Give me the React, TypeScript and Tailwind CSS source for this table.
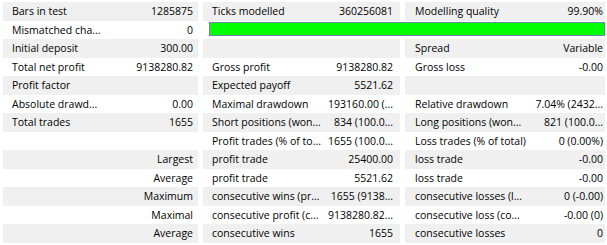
import React from 'react';

type Cell = { label?: string; value?: string };

const rows: Cell[][] = [
  [
    { label: 'Bars in test', value: '1285875' },
    { label: 'Ticks modelled', value: '360256081' },
    { label: 'Modelling quality', value: '99.90%' },
  ],
  [{ label: 'Mismatched cha...', value: '0' }],
  [
    { label: 'Initial deposit', value: '300.00' },
    {},
    { label: 'Spread', value: 'Variable' },
  ],
  [
    { label: 'Total net profit', value: '9138280.82' },
    { label: 'Gross profit', value: '9138280.82' },
    { label: 'Gross loss', value: '-0.00' },
  ],
  [
    { label: 'Profit factor' },
    { label: 'Expected payoff', value: '5521.62' },
    {},
  ],
  [
    { label: 'Absolute drawd...', value: '0.00' },
    { label: 'Maximal drawdown', value: '193160.00 (...' },
    { label: 'Relative drawdown', value: '7.04% (2432...' },
  ],
  [
    { label: 'Total trades', value: '1655' },
    { label: 'Short positions (won...', value: '834 (100.0...' },
    { label: 'Long positions (won...', value: '821 (100.0...' },
  ],
  [
    {},
    { label: 'Profit trades (% of to...', value: '1655 (100.0...' },
    { label: 'Loss trades (% of total)', value: '0 (0.00%)' },
  ],
  [
    { value: 'Largest' },
    { label: 'profit trade', value: '25400.00' },
    { label: 'loss trade', value: '-0.00' },
  ],
  [
    { value: 'Average' },
    { label: 'profit trade', value: '5521.62' },
    { label: 'loss trade', value: '-0.00' },
  ],
  [
    { value: 'Maximum' },
    { label: 'consecutive wins (pr...', value: '1655 (9138...' },
    { label: 'consecutive losses (l...', value: '0 (-0.00)' },
  ],
  [
    { value: 'Maximal' },
    { label: 'consecutive profit (c...', value: '9138280.82...' },
    { label: 'consecutive loss (co...', value: '-0.00 (0)' },
  ],
  [
    { value: 'Average' },
    { label: 'consecutive wins', value: '1655' },
    { label: 'consecutive losses', value: '0' },
  ],
];

const groups = [
  { w: 'w-[195px]', label: 'w-[105px] pl-[9px]', value: 'w-[90px] pr-[5px]' },
  { w: 'w-[197px]', label: 'w-[124px] pl-[9px]', value: 'w-[73px] pr-[7px]' },
  { w: 'w-[200px]', label: 'w-[128px] pl-[10px]', value: 'w-[72px] pr-[2px]' },
];

function Group({ cell, gi, shaded }: { cell?: Cell; gi: number; shaded: boolean }) {
  const g = groups[gi];
  return (
    <div className={`flex h-full ${g.w} ${shaded ? 'bg-[#f0f0f0]' : 'bg-white'}`}>
      <div className={`${g.label} overflow-hidden whitespace-nowrap`}>{cell?.label ?? ''}</div>
      <div className={`${g.value} overflow-hidden whitespace-nowrap text-right`}>{cell?.value ?? ''}</div>
    </div>
  );
}

export default function App() {
  return (
    <div
      className="w-[607px] h-[245px] bg-white pt-[2px] pl-[3px] text-[10.5px] font-medium text-black leading-[18.5px]"
      style={{ fontFamily: '"Open Sans", "Noto Sans", sans-serif' }}
    >
      {rows.map((row, ri) => {
        const shaded = ri % 2 === 0;
        if (ri === 1) {
          return (
            <div key={ri} className="flex h-[18.5px] gap-[5px]">
              <Group cell={row[0]} gi={0} shaded={false} />
              <div className="flex-1 pl-[6px] pr-[2px] pt-[1.5px]">
                <div className="h-[14px] w-[396px] bg-[#00ff00] border border-[#6b86a8]" />
              </div>
            </div>
          );
        }
        return (
          <div key={ri} className="flex h-[18.5px] gap-[5px]">
            <Group cell={row[0]} gi={0} shaded={shaded} />
            <Group cell={row[1]} gi={1} shaded={shaded} />
            <Group cell={row[2]} gi={2} shaded={shaded} />
          </div>
        );
      })}
    </div>
  );
}
